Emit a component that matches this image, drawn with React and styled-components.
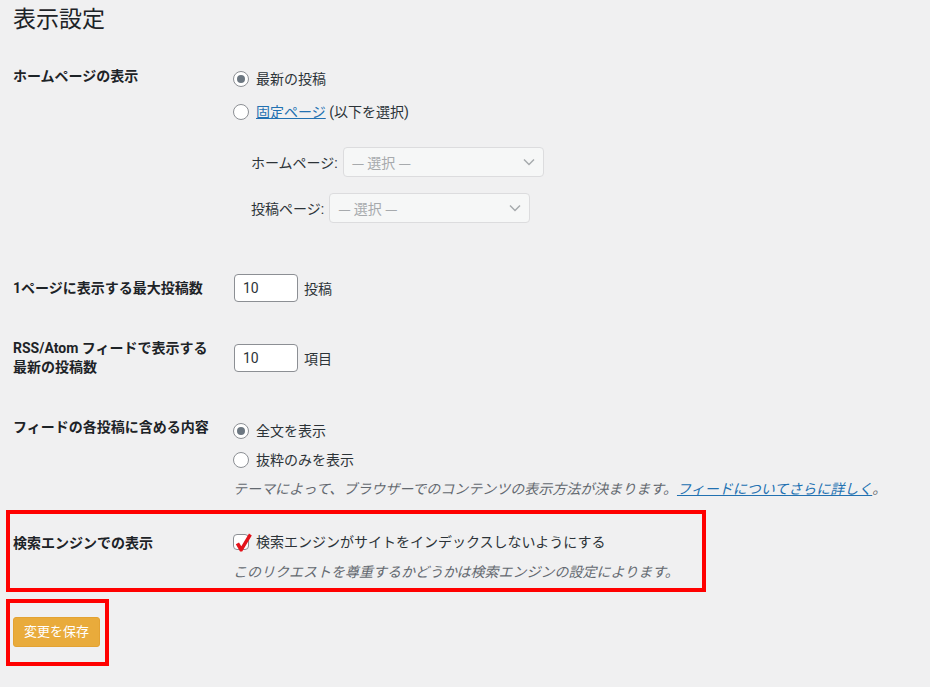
import React from 'react';
import styled, { createGlobalStyle } from 'styled-components';

const COLORS = {
  bg: '#f0f0f1',
  heading: '#1d2327',
  text: '#2c3338',
  muted: '#646970',
  link: '#2271b1',
  border: '#8c8f94',
  disabledBorder: '#dcdcde',
  disabledBg: '#f6f7f7',
  disabledText: '#a7aaad',
  highlight: '#ff0000',
  button: '#e9ab3b',
};

const GlobalStyle = createGlobalStyle`
  html, body {
    margin: 0;
    padding: 0;
    background: ${COLORS.bg};
  }
  body {
    font-family: Roboto, "Noto Sans CJK JP", sans-serif;
    font-size: 14px;
    color: ${COLORS.text};
  }
  * { box-sizing: border-box; }
`;

const Wrap = styled.div`
  padding: 0 0 20px 13px;
`;

const Title = styled.h1`
  margin: 5px 0 12px;
  font-size: 23px;
  line-height: 30px;
  font-weight: 400;
  color: ${COLORS.heading};
`;

const Row = styled.div`
  display: flex;
  align-items: ${(p) => (p.$middle ? 'center' : 'flex-start')};
`;

const Th = styled.div`
  width: 220px;
  flex-shrink: 0;
  padding: ${(p) => p.$pad || '20px 0'};
  font-weight: 700;
  line-height: ${(p) => p.$lh || '19px'};
  color: ${COLORS.heading};
`;

const Td = styled.div`
  flex: 1;
  padding: ${(p) => p.$pad || '15px 0'};
`;

const Line = styled.div`
  display: flex;
  align-items: center;
  gap: 7px;
  height: 20px;
  line-height: 20px;
  margin-top: ${(p) => p.$mt || 0}px;
  white-space: nowrap;
`;

const Radio = styled.span`
  width: 16px;
  height: 16px;
  flex-shrink: 0;
  border: 1px solid ${COLORS.border};
  border-radius: 50%;
  background: #fff;
  display: inline-flex;
  align-items: center;
  justify-content: center;

  &::after {
    content: '';
    width: 8px;
    height: 8px;
    border-radius: 50%;
    background: ${(p) => (p.$checked ? '#6c7781' : 'transparent')};
  }
`;

const Link = styled.a`
  color: ${COLORS.link};
  text-decoration: underline;
`;

const SelectGroup = styled.div`
  display: flex;
  flex-direction: column;
  gap: 16px;
  margin: 25px 0 21px 18px;
`;

const SelectRow = styled.label`
  display: flex;
  align-items: center;
  gap: 5px;
  height: 30px;
`;

const SelectBox = styled.div`
  width: 201px;
  height: 30px;
  display: flex;
  align-items: center;
  justify-content: space-between;
  padding: 0 8px 0 8px;
  border: 1px solid ${COLORS.disabledBorder};
  border-radius: 4px;
  background: ${COLORS.disabledBg};
  color: ${COLORS.disabledText};
  font-family: "Noto Sans CJK JP", sans-serif;
`;

const NumberRow = styled.div`
  display: flex;
  align-items: center;
  gap: 6px;
  padding-left: 1px;
`;

const NumberInput = styled.input`
  width: 64px;
  height: 28px;
  padding: 0 8px;
  border: 1px solid ${COLORS.border};
  border-radius: 4px;
  background: #fff;
  font: inherit;
  color: ${COLORS.text};
`;

const Description = styled.p`
  margin: ${(p) => p.$mt || 0}px 0 0;
  font-style: italic;
  line-height: 20px;
  color: ${COLORS.muted};
  white-space: nowrap;
`;

const Highlight = styled.div`
  width: 700px;
  margin-left: -7px;
  padding-left: 3px;
  border: 4px solid ${COLORS.highlight};
`;

const CheckWrap = styled.span`
  position: relative;
  width: 16px;
  height: 16px;
  flex-shrink: 0;
  border: 1px solid ${COLORS.border};
  border-radius: 4px;
  background: #fff;

  svg {
    position: absolute;
    left: 1px;
    top: -2px;
  }
`;

const SubmitBox = styled.div`
  display: inline-block;
  margin: 7px 0 0 -7px;
  padding: 14px 5px 15px 3px;
  border: 4px solid ${COLORS.highlight};
`;

const SaveButton = styled.button`
  display: block;
  width: 87px;
  height: 30px;
  padding: 0;
  border: 1px solid #e3a232;
  border-radius: 3px;
  background: ${COLORS.button};
  color: #fff;
  font-family: inherit;
  font-size: 13px;
  line-height: 28px;
`;

const Chevron = () => (
  <svg width="12" height="8" viewBox="0 0 12 8">
    <path d="M1 1.5 L6 6.5 L11 1.5" fill="none" stroke="#a7aaad" strokeWidth="1.5" />
  </svg>
);

const RedCheck = () => (
  <svg width="17" height="19" viewBox="0 0 17 19">
    <path d="M0.8 11.2 L4 9.4 L6.3 13.2 L14 0.6 L16.8 2.6 L7.2 18.4 L5 18.4 Z" fill="#e3131b" />
  </svg>
);

const App = () => (
  <Wrap>
    <GlobalStyle />
    <Title>表示設定</Title>

    <Row>
      <Th>ホームページの表示</Th>
      <Td>
        <Line $mt={7}>
          <Radio $checked />
          最新の投稿
        </Line>
        <Line $mt={13}>
          <Radio />
          <span>
            <Link href="#">固定ページ</Link> (以下を選択)
          </span>
        </Line>
        <SelectGroup>
          <SelectRow>
            ホームページ:
            <SelectBox>
              — 選択 —
              <Chevron />
            </SelectBox>
          </SelectRow>
          <SelectRow>
            投稿ページ:
            <SelectBox>
              — 選択 —
              <Chevron />
            </SelectBox>
          </SelectRow>
        </SelectGroup>
      </Td>
    </Row>

    <Row $middle>
      <Th $lh="18px">1ページに表示する最大投稿数</Th>
      <Td>
        <NumberRow>
          <NumberInput defaultValue="10" readOnly />
          投稿
        </NumberRow>
      </Td>
    </Row>

    <Row $middle>
      <Th $pad="22px 0">
        RSS/Atom フィードで表示する
        <br />
        最新の投稿数
      </Th>
      <Td>
        <NumberRow>
          <NumberInput defaultValue="10" readOnly />
          項目
        </NumberRow>
      </Td>
    </Row>

    <Row>
      <Th $pad="19px 0 0">フィードの各投稿に含める内容</Th>
      <Td $pad="15px 0 11px">
        <Line $mt={7}>
          <Radio $checked />
          全文を表示
        </Line>
        <Line $mt={9}>
          <Radio />
          抜粋のみを表示
        </Line>
        <Description $mt={9}>
          テーマによって、ブラウザーでのコンテンツの表示方法が決まります。
          <Link href="#">フィードについてさらに詳しく</Link>。
        </Description>
      </Td>
    </Row>

    <Highlight>
      <Row>
        <Th $pad="20px 0 0">検索エンジンでの表示</Th>
        <Td $pad="18px 0 6px">
          <Line>
            <CheckWrap>
              <RedCheck />
            </CheckWrap>
            検索エンジンがサイトをインデックスしないようにする
          </Line>
          <Description $mt={10}>
            このリクエストを尊重するかどうかは検索エンジンの設定によります。
          </Description>
        </Td>
      </Row>
    </Highlight>

    <SubmitBox>
      <SaveButton type="button">変更を保存</SaveButton>
    </SubmitBox>
  </Wrap>
);

export default App;
